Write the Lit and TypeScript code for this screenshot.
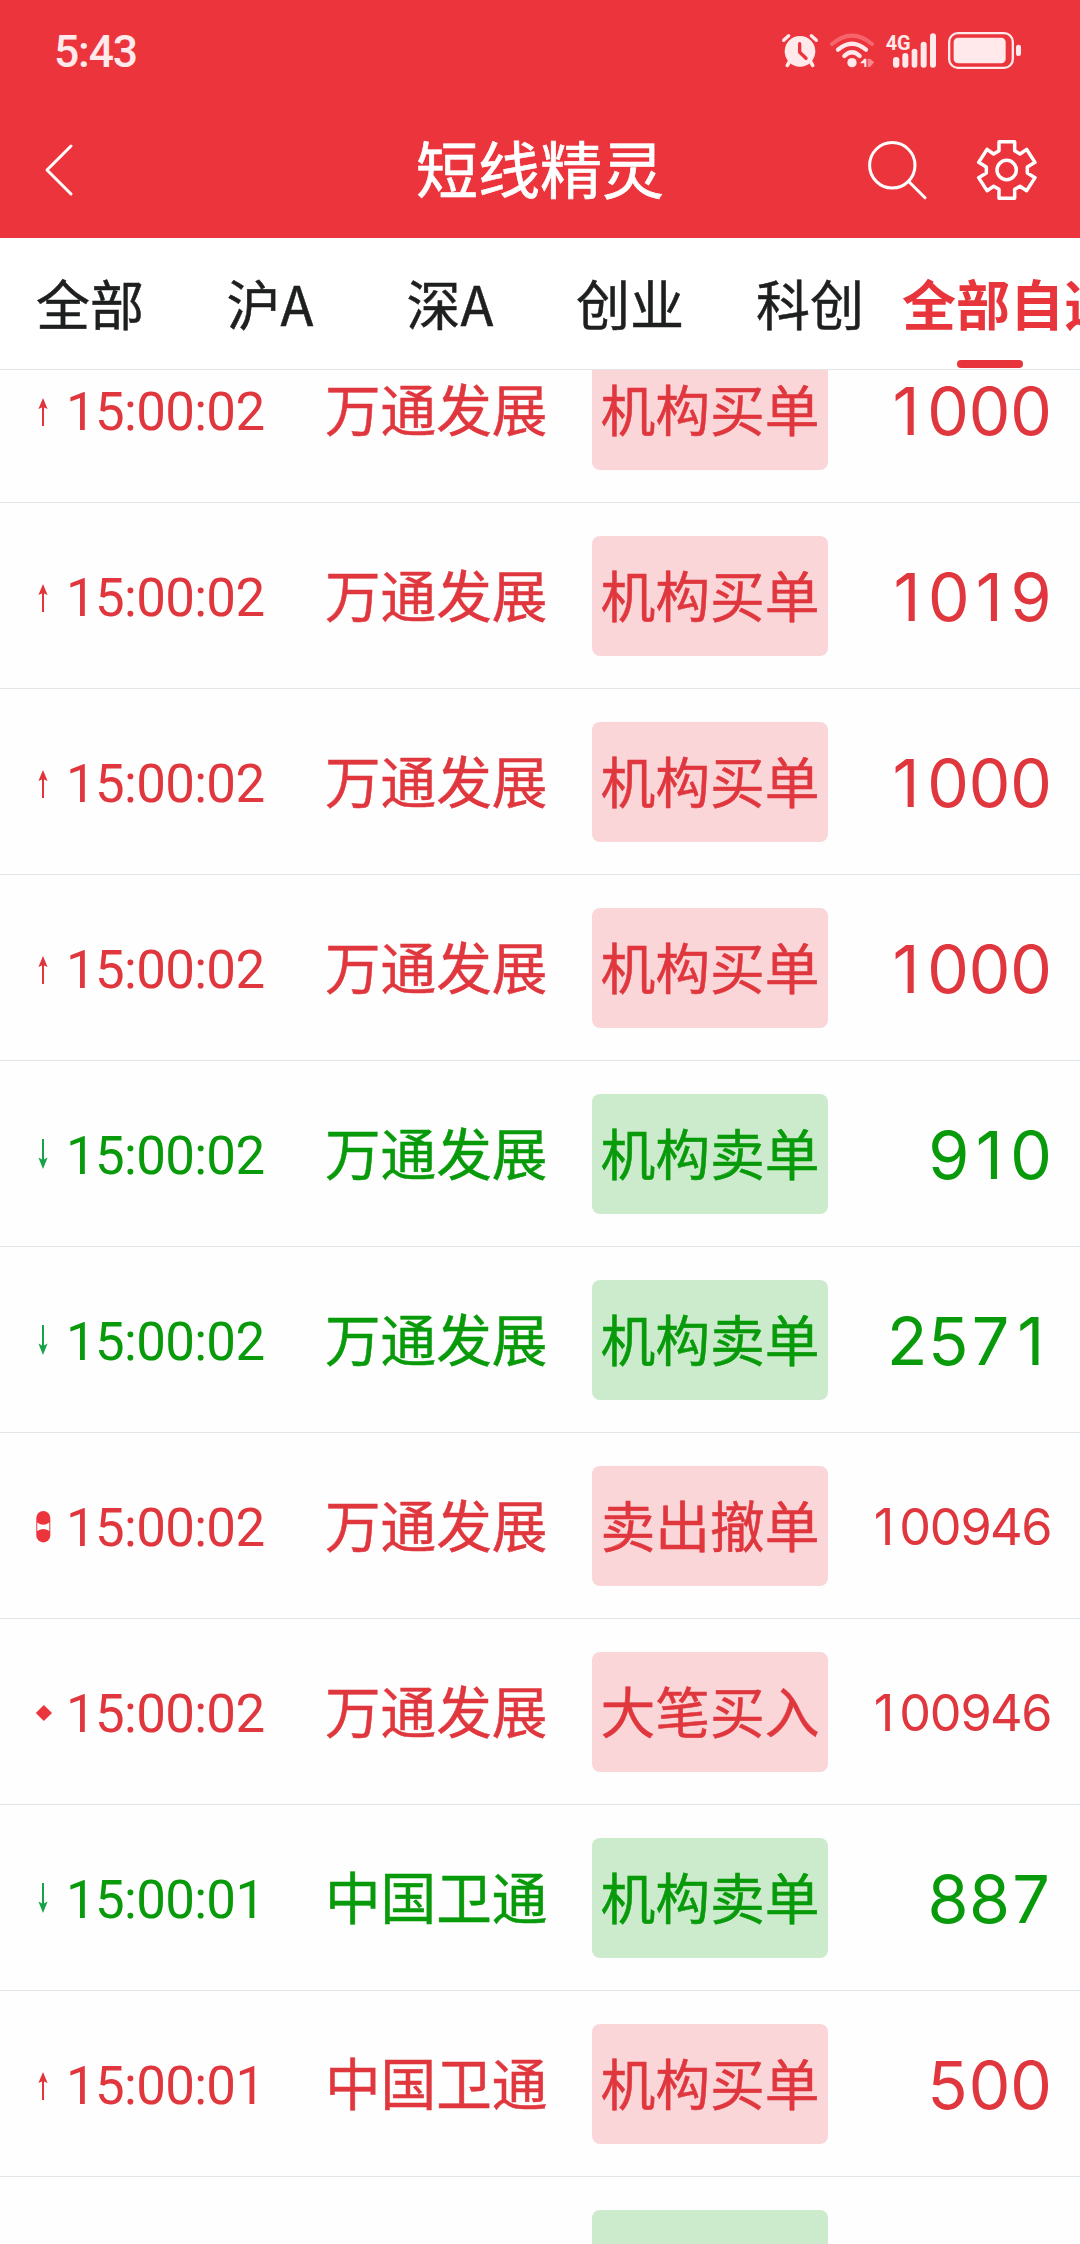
import { LitElement, html, css, svg } from "lit";
import { customElement, property } from "lit/decorators.js";
import { classMap } from "lit/directives/class-map.js";

type Marker = "up" | "down" | "capsule" | "diamond";
type Trade = { marker: Marker; sell?: boolean; time: string; name: string; kind: string; volume: string };

const up = (time: string, name: string, volume: string): Trade =>
  ({ marker: "up", time, name, kind: "机构买单", volume });
const down = (time: string, name: string, volume: string): Trade =>
  ({ marker: "down", sell: true, time, name, kind: "机构卖单", volume });

const TRADES: Trade[] = [
  up("15:00:02", "万通发展", "1000"),
  up("15:00:02", "万通发展", "1019"),
  up("15:00:02", "万通发展", "1000"),
  up("15:00:02", "万通发展", "1000"),
  down("15:00:02", "万通发展", "910"),
  down("15:00:02", "万通发展", "2571"),
  { marker: "capsule", time: "15:00:02", name: "万通发展", kind: "卖出撤单", volume: "100946" },
  { marker: "diamond", time: "15:00:02", name: "万通发展", kind: "大笔买入", volume: "100946" },
  down("15:00:01", "中国卫通", "887"),
  up("15:00:01", "中国卫通", "500"),
  { marker: "down", sell: true, time: "", name: "", kind: "", volume: "" },
];

const TABS = ["全部", "沪A", "深A", "创业", "科创", "全部自选"];

const MARKERS = {
  up: svg`<path d="M10 8 L14.6 19 L11 17.4 V36 H9 V17.4 L5.4 19 Z" fill="#e0353d"/>`,
  down: svg`<path d="M10 35 L14.6 23.6 L11 25.4 V5 H9 V25.4 L5.4 23.6 Z" fill="#18a34a"/>`,
  capsule: svg`<rect x="3.3" y="5" width="14" height="31.4" rx="7" fill="#ec343c"/>
    <path d="M4.3 16.4 Q10.3 21 16.3 16.4 V25 Q10.3 20.8 4.3 25 Z" fill="#fff"/>`,
  diamond: svg`<path d="M10.8 13 L19 21 L10.8 29 L2.8 21 Z" fill="#ec343c"/>`,
};

@customElement("status-bar")
class StatusBar extends LitElement {
  static styles = css`
    :host { display: flex; align-items: flex-start; height: 102px; padding: 0 56px 0 54px; color: #ffe9ea; }
    .clock { flex: 1; padding-top: 25px; font: 500 44.5px/54px Roboto, sans-serif; letter-spacing: -1.2px; }
    .icons { display: flex; gap: 8px; padding-top: 30px; }
    svg { display: block; height: 42px; }
    .net { font: 700 62px Roboto, sans-serif; }
  `;
  render() {
    return html`
      <div class="clock">5:43</div>
      <div class="icons">
        <svg width="40" viewBox="60 60 120 126" fill="none" stroke-linecap="round">
          <circle cx="120" cy="124" r="46" fill="#ffe9ea"/>
          <path d="M71 91 L86 77 M169 91 L154 77" stroke="#ffe9ea" stroke-width="10"/>
          <path d="M90 152 L82 166 M150 152 L158 166" stroke="#ffe9ea" stroke-width="11"/>
          <path d="M119 101 V127 L138 145" stroke="#ec343c" stroke-width="10" stroke-linejoin="round"/>
        </svg>
        <svg width="48" viewBox="204 60 144 126" fill="none" stroke-linecap="round" stroke="#ffe9ea">
          <path d="M216 102 Q276 52 336 102" stroke="#f7656c" stroke-width="12"/>
          <path d="M234 119 Q276 83 318 119" stroke-width="13"/>
          <path d="M253 138 Q276 116 299 138" stroke-width="13"/>
          <circle cx="276" cy="158" r="14" fill="#ffe9ea" stroke="none"/>
          <path d="M300 160 L313 146 H319 V171 H313 V160 Z" fill="#ffe9ea" stroke="none"/>
          <path d="M323 146 H330 L343 157 L330 171 H323 Z" fill="#f8858b" stroke="none"/>
        </svg>
        <svg width="54" viewBox="372 60 162 126">
          <g fill="#ffe9ea">
            <rect x="399" y="141" width="19" height="32" rx="9"/>
            <rect x="427" y="129" width="18" height="44" rx="9"/>
            <rect x="455" y="116" width="17" height="57" rx="8"/>
            <rect x="482" y="95" width="18" height="78" rx="9"/>
            <rect x="510" y="70" width="18" height="103" rx="9"/>
            <text class="net" x="377" y="120" textLength="75" lengthAdjust="spacingAndGlyphs">4G</text>
          </g>
        </svg>
        <svg width="78" viewBox="558 60 234 126">
          <rect x="567.5" y="69.5" width="191" height="104" rx="26" fill="none" stroke="#ffe9ea" stroke-width="7"/>
          <rect x="581" y="83" width="156" height="77" rx="13" fill="#ffe9ea"/>
          <rect x="768" y="104" width="15" height="34" rx="7" fill="#ffe9ea"/>
        </svg>
      </div>`;
  }
}

@customElement("title-bar")
class TitleBar extends LitElement {
  static styles = css`
    :host { display: grid; grid-template-columns: 240px 1fr 240px; align-items: center; height: 136px; color: #fff; }
    .back { padding-left: 40px; }
    .title { padding-bottom: 6px; text-align: center; font: 400 62px/90px "Noto Sans CJK SC", sans-serif; -webkit-text-stroke: 0.7px currentColor; }
    .tools { display: flex; justify-content: flex-end; gap: 44px; padding-right: 39px; }
    svg { display: block; fill: none; stroke: #fff; }
  `;
  render() {
    return html`
      <div class="back">
        <svg width="40" height="60" viewBox="40 140 40 60" stroke-width="3" stroke-linecap="round" stroke-linejoin="round">
          <path d="M71 146 L47 170 L71 194"/>
        </svg>
      </div>
      <div class="title">短线精灵</div>
      <div class="tools">
        <svg width="64" height="68" viewBox="864 136 64 68" stroke-width="3" stroke-linecap="round">
          <circle cx="892.3" cy="165.3" r="22.7"/><path d="M909 181.8 L925 197.8"/>
        </svg>
        <svg width="69" height="68" viewBox="637 78 207 204" stroke-width="10.5" stroke-linejoin="round">
          <circle cx="741" cy="180" r="29"/>
          <path d="M718 95 H765 V122 L781 132 L801 118 L826 157 L803 171 V189 L826 203 L801 242 L781 229 L765 238 V265 H718 V238 L702 229 L682 242 L657 203 L680 189 V171 L657 157 L682 118 L702 132 L718 122 Z"/>
        </svg>
      </div>`;
  }
}

@customElement("market-tabs")
class MarketTabs extends LitElement {
  static styles = css`
    :host { display: grid; grid-template-columns: repeat(6, 180px); height: 131px; border-bottom: 1px solid #e4e5e6; overflow: hidden; background: #fff; }
    .tab { display: flex; flex-direction: column; align-items: center; padding-top: 25px; color: #1e1f1f; font: 400 54px/80px "Noto Sans CJK SC", sans-serif; white-space: nowrap; -webkit-text-stroke: 0.5px currentColor; }
    .tab.active { color: #e8343b; font-weight: 700; -webkit-text-stroke-width: 0; }
    .label { max-width: 100%; }
    .active .label { padding-left: 2px; box-sizing: border-box; }
    .line { width: 66px; height: 8px; margin-top: 17px; border-radius: 4px; background: #e8343b; }
  `;
  render() {
    return TABS.map((t, i) => {
      const active = i === TABS.length - 1;
      return html`<div class=${classMap({ tab: true, active })}>
        <span class="label">${t}</span>${active ? html`<span class="line"></span>` : ""}
      </div>`;
    });
  }
}

@customElement("trade-row")
class TradeRow extends LitElement {
  @property({ attribute: false }) trade!: Trade;
  static styles = css`
    :host { display: block; }
    .row { display: grid; grid-template-columns: 33px 259px 267px 236px 1fr; align-items: center; box-sizing: border-box; height: 186px; padding: 33px 29px 32px 33px; border-top: 1px solid #e4e5e6; color: #e0373e; white-space: nowrap; }
    .row.sell { color: #089a0a; }
    .marker { display: block; }
    .time { padding-top: 3px; font: 400 52.8px/64px Roboto, sans-serif; letter-spacing: -0.65px; }
    .name { padding-bottom: 6px; font: 400 55.6px/80px "Noto Sans CJK SC", sans-serif; -webkit-text-stroke: 0.5px currentColor; }
    .kind { display: flex; align-items: center; justify-content: center; box-sizing: border-box; height: 120px; padding-bottom: 6px; border-radius: 8px; background: #fad6d9; font: 400 54.8px/80px "Noto Sans CJK SC", sans-serif; -webkit-text-stroke: 0.5px currentColor; }
    .sell .kind { background: #cbebcc; }
    .volume { padding-top: 1px; text-align: right; font: 400 66.5px/80px Inter, sans-serif; font-feature-settings: "tnum"; letter-spacing: -1.6px; }
    .one { display: inline-block; width: 40.6px; text-align: center; font-feature-settings: "tnum" 0; letter-spacing: 0; }
    .volume.long { font-size: 50.5px; letter-spacing: -2.3px; }
    .long .one { width: 29.4px; }
  `;
  render() {
    const t = this.trade;
    const digits = [...t.volume].map((d) => (d === "1" ? html`<span class="one">1</span>` : d));
    return html`<div class=${classMap({ row: true, sell: !!t.sell })}>
      <svg class="marker" width="20" height="40" viewBox="0 0 20 40">${MARKERS[t.marker]}</svg>
      <span class="time">${t.time}</span>
      <span class="name">${t.name}</span>
      <span class="kind">${t.kind}</span>
      <span class=${classMap({ volume: true, long: t.volume.length > 4 })}>${digits}</span>
    </div>`;
  }
}

@customElement("app-root")
class AppRoot extends LitElement {
  static styles = css`
    :host { display: flex; flex-direction: column; width: 1080px; height: 2244px; overflow: hidden; background: #fefefe; }
    .head { background: #ec343c; }
    .list { flex: 1; min-height: 0; overflow: hidden; }
    .feed { margin-top: -54px; }
  `;
  render() {
    return html`
      <div class="head"><status-bar></status-bar><title-bar></title-bar></div>
      <market-tabs></market-tabs>
      <div class="list"><div class="feed">
        ${TRADES.map((t) => html`<trade-row .trade=${t}></trade-row>`)}
      </div></div>`;
  }
}
